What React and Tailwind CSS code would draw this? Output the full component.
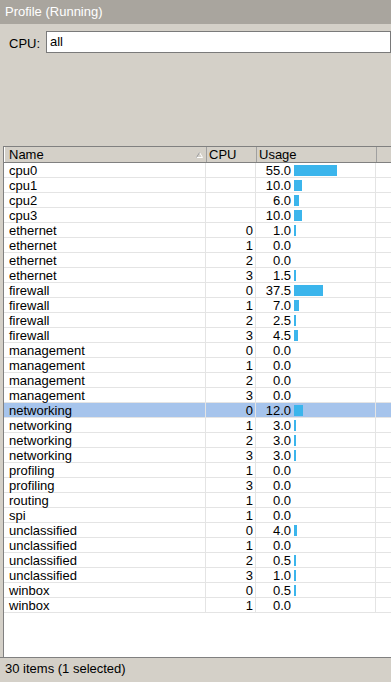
const rows = [
  ["cpu0", "", "55.0"],
  ["cpu1", "", "10.0"],
  ["cpu2", "", "6.0"],
  ["cpu3", "", "10.0"],
  ["ethernet", "0", "1.0"],
  ["ethernet", "1", "0.0"],
  ["ethernet", "2", "0.0"],
  ["ethernet", "3", "1.5"],
  ["firewall", "0", "37.5"],
  ["firewall", "1", "7.0"],
  ["firewall", "2", "2.5"],
  ["firewall", "3", "4.5"],
  ["management", "0", "0.0"],
  ["management", "1", "0.0"],
  ["management", "2", "0.0"],
  ["management", "3", "0.0"],
  ["networking", "0", "12.0"],
  ["networking", "1", "3.0"],
  ["networking", "2", "3.0"],
  ["networking", "3", "3.0"],
  ["profiling", "1", "0.0"],
  ["profiling", "3", "0.0"],
  ["routing", "1", "0.0"],
  ["spi", "1", "0.0"],
  ["unclassified", "0", "4.0"],
  ["unclassified", "1", "0.0"],
  ["unclassified", "2", "0.5"],
  ["unclassified", "3", "1.0"],
  ["winbox", "0", "0.5"],
  ["winbox", "1", "0.0"],
];

function Row({ name, cpu, usage, selected }) {
  const v = parseFloat(usage);
  const w = v > 0 ? Math.max(2, Math.round(v * 0.78)) : 0;
  return (
    <div
      className={`flex h-[15px] border-b border-[#e4e4e4] text-[13px] ${selected ? "bg-[#a6c4ec]" : ""}`}
    >
      <div className="w-[202px] shrink-0 border-r border-[#e4e4e4] pl-[5px] leading-[15px]">{name}</div>
      <div className="w-[50px] shrink-0 border-r border-[#e4e4e4] pr-[2px] text-right leading-[15px]">{cpu}</div>
      <div className="flex w-[120px] shrink-0 border-r border-[#e4e4e4]">
        <div className="w-[35px] text-right leading-[15px]">{usage}</div>
        <div className="ml-[3px] flex items-center">
          {w > 0 && <div className="h-[11px] bg-[#3bb5ec]" style={{ width: w }} />}
        </div>
      </div>
      <div className="flex-1" />
    </div>
  );
}

export default function App() {
  return (
    <div className="flex h-[682px] w-[391px] flex-col overflow-hidden bg-[#d4d0c8] text-[12px] text-black" style={{ fontFamily: '"Liberation Sans", Arial, sans-serif' }}>
      {/* title */}
      <div className="h-[24px] shrink-0 bg-[#a9a59e] pl-[5px] text-[13px] leading-[24px] text-white">
        Profile (Running)
      </div>

      {/* filter */}
      <div className="flex h-[122px] shrink-0 items-start pt-[7px]">
        <span className="ml-[9px] mt-[3px] w-[37px] text-[13px]">CPU:</span>
        <div className="h-[22px] flex-1 border border-[#7a7a7a] bg-white pl-[3px] text-[13px] leading-[20px]">all</div>
      </div>

      {/* table */}
      <div className="ml-[3px] flex min-h-0 flex-1 flex-col border-l border-t border-[#808080] bg-white">
        <div className="flex h-[16px] shrink-0 border-b border-[#808080] bg-[#d4d0c8] text-[13px]">
          <div className="flex w-[202px] shrink-0 items-center justify-between border-l border-white pl-[4px] pr-[3px]">
            <span className="leading-[15px]">Name</span>
            <svg width="7" height="6" viewBox="0 0 7 6">
              <path d="M3.5 0.5 L6.5 5.5 L0.5 5.5 Z" fill="none" stroke="#ffffff" strokeWidth="1" />
              <path d="M3.5 0.5 L0.5 5.5" stroke="#8e8e8e" strokeWidth="1" />
            </svg>
          </div>
          <div className="w-[50px] shrink-0 border-l border-[#a0a0a0] pl-[2px] leading-[15px]">CPU</div>
          <div className="w-[120px] shrink-0 border-l border-[#a0a0a0] pl-[2px] leading-[15px]">Usage</div>
          <div className="flex-1 border-l border-[#a0a0a0]" />
        </div>
        <div className="flex-1">
          {rows.map((r, i) => (
            <Row key={i} name={r[0]} cpu={r[1]} usage={r[2]} selected={i === 16} />
          ))}
        </div>
      </div>

      {/* status */}
      <div className="h-[25px] shrink-0 border-t border-[#808080] pl-[5px] text-[13px] leading-[22px]">
        30 items (1 selected)
      </div>
    </div>
  );
}
